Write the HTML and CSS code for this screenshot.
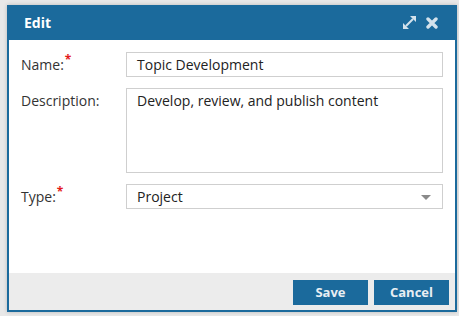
FILE: index.html
```html
<!DOCTYPE html>
<html>
<head>
<meta charset="utf-8">
<link rel="stylesheet" href="styles.css">
</head>
<body>
<div class="dialog">
  <div class="header">
    <span class="title">Edit</span>
    <div class="tools">
      <svg class="icon" width="15" height="15" viewBox="0 0 15 15">
        <path d="M4 11L11 4" stroke="#d3e2ec" stroke-width="2"/>
        <path d="M8 1h6v6z M7 14H1V8z" fill="#d3e2ec"/>
      </svg>
      <svg class="icon" width="12" height="12" viewBox="0 0 12 12">
        <path d="M2 2L10 10M10 2L2 10" stroke="#d3e2ec" stroke-width="3.4" stroke-linecap="round"/>
      </svg>
    </div>
  </div>
  <div class="body">
    <div class="row">
      <label class="label">Name:<span class="req">*</span></label>
      <div class="field input">Topic Development</div>
    </div>
    <div class="row">
      <label class="label">Description:</label>
      <div class="field textarea">Develop, review, and publish content</div>
    </div>
    <div class="row">
      <label class="label">Type:<span class="req">*</span></label>
      <div class="field input select">Project<span class="caret"></span></div>
    </div>
  </div>
  <div class="footer">
    <button class="btn">Save</button>
    <button class="btn">Cancel</button>
  </div>
</div>
</body>
</html>
```
FILE: styles.css
```css
html, body {
  margin: 0;
  padding: 0;
  background: #e8e8e8;
  font-family: "Open Sans", "DejaVu Sans", sans-serif;
}
body {
  padding: 5px 2px 4px 7px;
}
.dialog {
  width: 446px;
  height: 305px;
  border: 2px solid #1b6a9c;
  border-top: 0;
  background: #fff;
  display: flex;
  flex-direction: column;
  box-shadow: 0 0 4px rgba(0,0,0,0.2);
}
.header {
  height: 35px;
  background: #1b6a9c;
  margin: 0 -2px;
  padding: 0 19px 0 17px;
  display: flex;
  align-items: center;
  justify-content: space-between;
  flex-shrink: 0;
}
.title {
  color: #fff;
  font-weight: bold;
  font-size: 14px;
}
.tools {
  display: flex;
  align-items: center;
  gap: 9px;
}
.icon { display: block; }
.body {
  flex: 1;
  padding: 12px 12px 0 12px;
  display: flex;
  flex-direction: column;
  gap: 11px;
}
.row {
  display: flex;
  align-items: flex-start;
}
.label {
  width: 105px;
  font-size: 14px;
  color: #333;
  padding-top: 3px;
  line-height: 20px;
}
.req {
  color: #e31b1b;
  font-size: 12px;
  font-weight: bold;
  vertical-align: 6px;
  line-height: 0;
  margin-left: 1px;
}
.field {
  flex: 1;
  border: 1px solid #cfcfcf;
  font-size: 14px;
  color: #222;
  padding: 2px 10px;
  line-height: 19px;
  position: relative;
}
.input { height: 19px; }
.textarea { height: 79px; }
.caret {
  position: absolute;
  right: 11px;
  top: 10px;
  width: 0;
  height: 0;
  border-left: 5px solid transparent;
  border-right: 5px solid transparent;
  border-top: 5px solid #8a8a8a;
}
.footer {
  height: 37px;
  background: #ececec;
  display: flex;
  justify-content: flex-end;
  align-items: center;
  gap: 6px;
  padding: 0 6px;
  flex-shrink: 0;
}
.btn {
  width: 75px;
  height: 25px;
  border: 0;
  background: #1b6a9c;
  color: #e8eef3;
  font-family: "Open Sans", "DejaVu Sans", sans-serif;
  font-weight: bold;
  font-size: 13px;
  padding: 0;
  margin-top: 1px;
}
```
